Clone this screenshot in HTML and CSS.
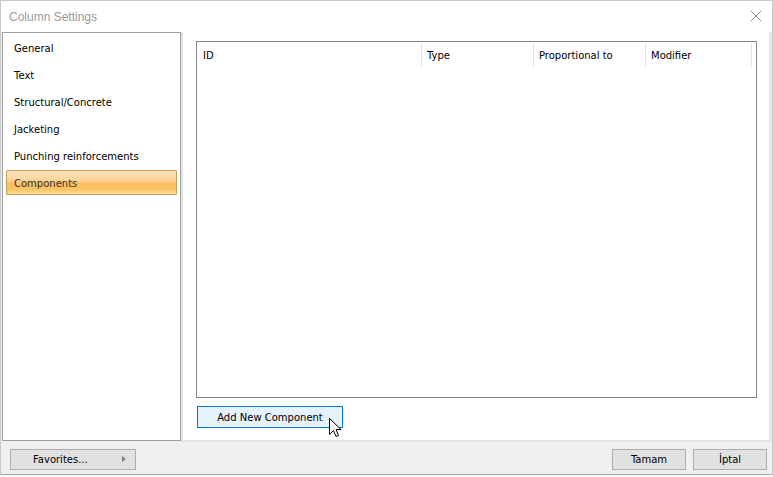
FILE: index.html
```html
<!DOCTYPE html>
<html lang="en">
<head>
<meta charset="utf-8">
<title>Column Settings</title>
<link rel="stylesheet" href="styles.css">
</head>
<body>
<div class="window">
  <div class="titlebar">
    <span class="title">Column Settings</span>
    <svg class="close" width="12" height="12" viewBox="0 0 12 12"><path d="M1 1 L11 11 M11 1 L1 11" stroke="#8a8a8a" stroke-width="1" fill="none"/></svg>
  </div>
  <div class="content">
    <div class="nav">
      <div class="nav-item">General</div>
      <div class="nav-item">Text</div>
      <div class="nav-item">Structural/Concrete</div>
      <div class="nav-item">Jacketing</div>
      <div class="nav-item">Punching reinforcements</div>
      <div class="nav-item selected">Components</div>
    </div>
    <div class="main">
      <div class="list">
        <div class="list-header">
          <div class="col col-id">ID</div>
          <div class="col col-type">Type</div>
          <div class="col col-prop">Proportional to</div>
          <div class="col col-mod">Modifier</div>
        </div>
      </div>
      <div class="add-row">
        <button class="btn btn-add">Add New Component</button>
        <svg class="cursor" width="13" height="20" viewBox="0 0 13 20"><path d="M0.5 0.5 L0.5 16.5 L4.5 12.5 L7 18.5 L9.5 17.5 L7 11.5 L12 11.5 Z" fill="#fff" stroke="#000" stroke-width="1" stroke-linejoin="miter"/></svg>
      </div>
    </div>
  </div>
  <div class="footer">
    <button class="btn btn-fav">Favorites...<span class="tri"></span></button>
    <div class="footer-right">
      <button class="btn btn-dlg">Tamam</button>
      <button class="btn btn-dlg">İptal</button>
    </div>
  </div>
</div>
</body>
</html>
```

FILE: styles.css
```css
* { box-sizing: border-box; }
html, body { margin: 0; padding: 0; }
body {
  width: 773px;
  height: 477px;
  background: #f7f7f7;
  font-family: "DejaVu Sans", Verdana, sans-serif;
  font-size: 10px;
  color: #000;
  overflow: hidden;
}
.window {
  width: 773px;
  height: 475px;
  background: #f0f0f0;
  border: 1px solid #c8c8c8;
  border-bottom-color: #a8a8a8;
  display: flex;
  flex-direction: column;
}
.titlebar {
  height: 31px;
  background: #fff;
  display: flex;
  align-items: center;
  justify-content: space-between;
  padding: 0 10px 0 8px;
  flex: none;
}
.title {
  font-family: "Liberation Sans", Arial, sans-serif;
  font-size: 12px;
  color: #9a9a9a;
}
.close { display: block; margin-top: -2px; }
.content {
  display: flex;
  height: 410px;
  flex: none;
  padding-left: 1px;
}
.nav {
  width: 179px;
  height: 409px;
  background: #fff;
  border: 1px solid #a0a0a0;
  box-shadow: 1px 0 0 #d4d4d4;
  padding-top: 2px;
  flex: none;
}
.nav-item {
  height: 25px;
  margin: 0 3px 2px 3px;
  padding: 1px 0 0 7px;
  line-height: 23px;
  border: 1px solid transparent;
  white-space: nowrap;
}
.nav-item.selected {
  border-color: #c9a05a;
  border-radius: 1px;
  color: #333;
  background: linear-gradient(to bottom, #fde4bd 0%, #fcd49a 40%, #fbbe5d 55%, #fcc465 80%, #fde09a 100%);
}
.main {
  width: 590px;
  height: 410px;
  background: #fff;
  border: 2px solid #e3e3e3;
  border-top: none;
  padding: 9px 0 0 13px;
  flex: none;
}
.list {
  width: 561px;
  height: 357px;
  border: 1px solid #828790;
  background: #fff;
}
.list-header {
  display: flex;
  height: 25px;
  padding-top: 1px;
}
.col {
  height: 24px;
  line-height: 22px;
  padding-top: 2px;
  border-right: 1px solid #e5e5e5;
  padding-left: 5px;
  white-space: nowrap;
}
.col-id { width: 225px; padding-left: 6px; }
.col-type { width: 112px; }
.col-prop { width: 112px; }
.col-mod { width: 106px; }
.add-row {
  position: relative;
  margin-top: 8px;
  padding-left: 1px;
  height: 22px;
}
.btn {
  font-family: "DejaVu Sans", Verdana, sans-serif;
  font-size: 10px;
  color: #000;
  margin: 0;
  padding: 0;
  display: block;
}
.btn-add {
  width: 146px;
  height: 22px;
  background: #e5f1fb;
  border: 1px solid #0078d7;
}
.cursor {
  position: absolute;
  left: 133px;
  top: 12px;
}
.footer {
  flex: 1;
  display: flex;
  justify-content: space-between;
  padding: 7px 5px 0 9px;
}
.btn-fav {
  position: relative;
  width: 126px;
  height: 21px;
  background: #e1e1e1;
  border: 1px solid #adadad;
  text-align: left;
  padding-left: 22px;
}
.tri {
  position: absolute;
  right: 9px;
  top: 6px;
  width: 0;
  height: 0;
  border-top: 3.5px solid transparent;
  border-bottom: 3.5px solid transparent;
  border-left: 4px solid #808080;
}
.footer-right {
  display: flex;
  gap: 7px;
}
.btn-dlg {
  width: 74px;
  height: 21px;
  background: #e1e1e1;
  border: 1px solid #adadad;
}
```
